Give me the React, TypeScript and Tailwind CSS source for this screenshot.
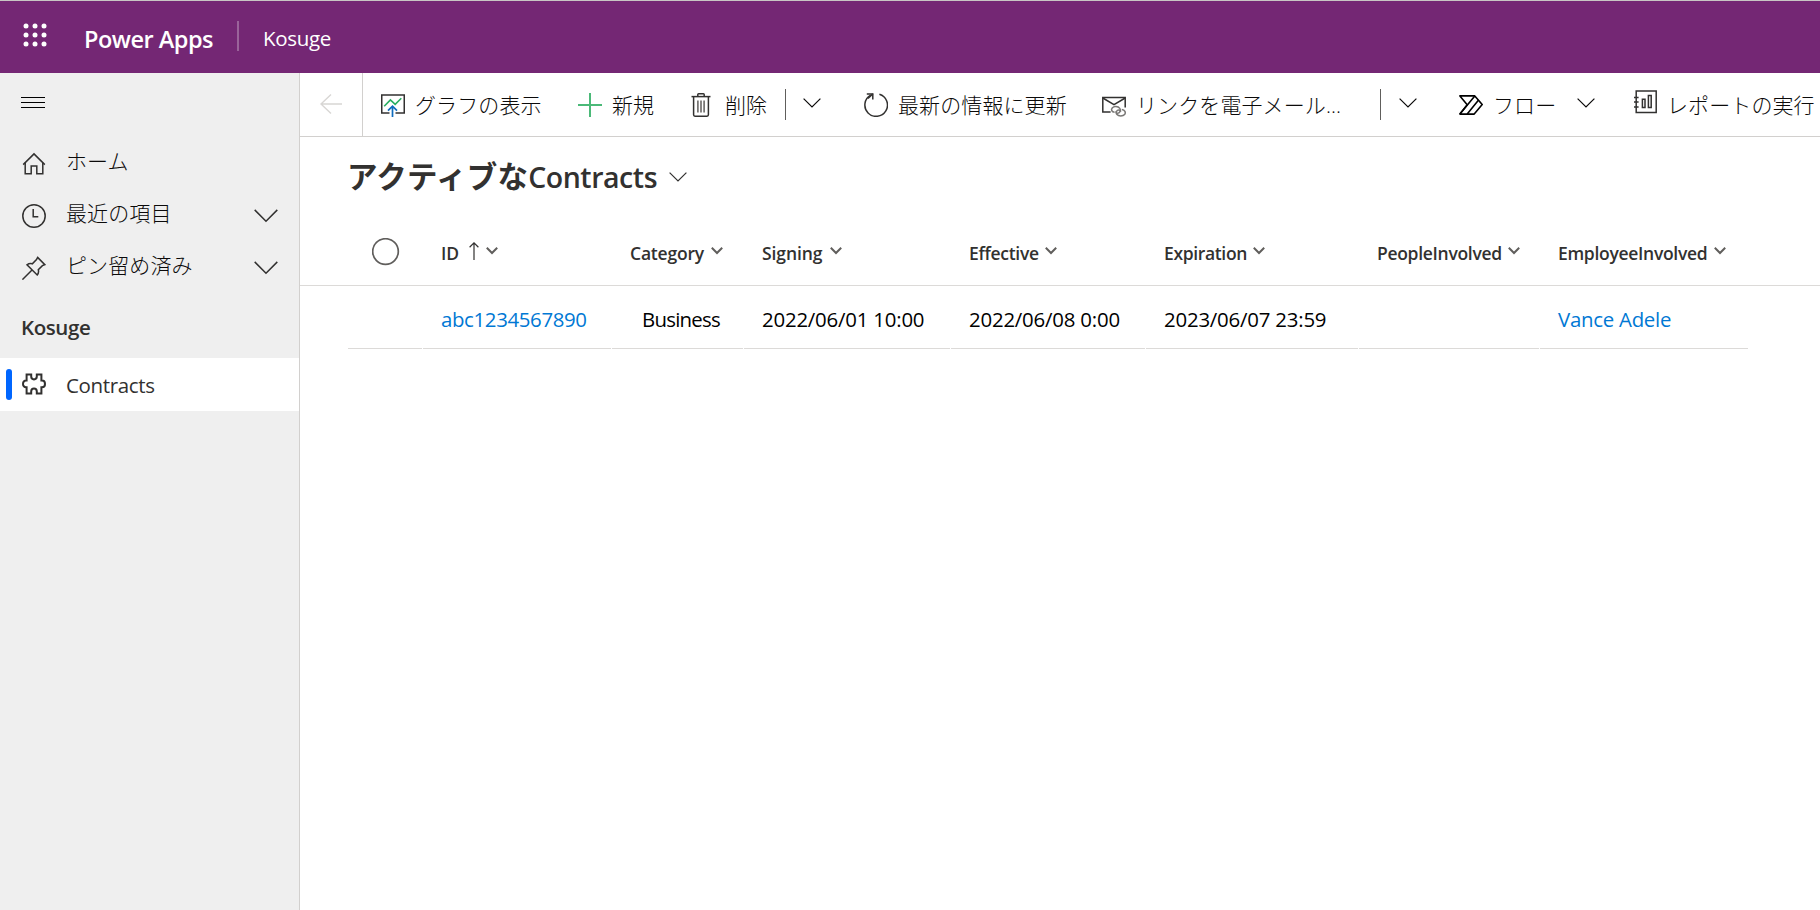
import React from "react";

type IconProps = { className?: string };

const ja = "font-['Open_Sans','Noto_Sans_CJK_JP',sans-serif]";

function Chevron({ className = "" }: IconProps) {
  return (
    <svg className={`shrink-0 ${className}`} viewBox="0 0 18 10" fill="none" stroke="currentColor" strokeWidth="1.2">
      <path d="M0.6 0.6 L9 9 L17.4 0.6" />
    </svg>
  );
}

function NavChevron({ className = "" }: IconProps) {
  return (
    <svg className={`h-[14px] w-[24px] shrink-0 ${className}`} viewBox="0 0 24 14" fill="none" stroke="#323130" strokeWidth="1.5">
      <path d="M0.7 0.9 L12 12.3 L23.3 0.9" />
    </svg>
  );
}

function SmallChevron() {
  return (
    <svg className="mb-px h-[8px] w-[12px] shrink-0" viewBox="0 0 12 8" fill="none" stroke="#605e5c" strokeWidth="2">
      <path d="M0.8 0.8 L6 6 L11.2 0.8" />
    </svg>
  );
}

function WaffleIcon() {
  return (
    <svg className="h-6 w-6 shrink-0" viewBox="0 0 24 24" fill="#fff">
      {[3, 12, 21].map((y) => [3, 12, 21].map((x) => <circle key={`${x}-${y}`} cx={x} cy={y} r="2.5" />))}
    </svg>
  );
}

function HomeIcon() {
  return (
    <svg className="mt-px h-6 w-6 shrink-0" viewBox="0 0 24 24" fill="none" stroke="#323130" strokeWidth="1.5">
      <path d="M1.2 12.6 L12 1.9 L22.8 12.6" />
      <path d="M3.2 10.8 V21.7 H9.2 V14 H14.8 V21.7 H20.8 V10.8" />
    </svg>
  );
}

function ClockIcon() {
  return (
    <svg className="mt-px h-6 w-6 shrink-0" viewBox="0 0 24 24" fill="none" stroke="#323130" strokeWidth="1.5">
      <circle cx="12" cy="12" r="11.2" />
      <path d="M11.2 5 V12.7 H16.3" />
    </svg>
  );
}

function PinIcon() {
  return (
    <svg className="mt-px h-6 w-6 shrink-0" viewBox="0 0 24 24" fill="none" stroke="#323130" strokeWidth="1.5">
      <path d="M15.6 1.4 L22.8 8.6 L20.4 9.6 L16.3 13.7 C16.9 15.8 16.4 17.6 15.2 19 L5 8.8 C6.6 7.6 8.4 7.3 10.3 7.8 L14.5 3.6 Z" />
      <path d="M10 14 L0.4 23.6" />
    </svg>
  );
}

function PuzzleIcon() {
  return (
    <svg className="h-[22px] w-6 shrink-0" viewBox="0 0 24 22" fill="none" stroke="#323130" strokeWidth="2">
      <path d="M4.6 1.4 H9.2 V3.6 C9.2 5.2 10.3 6.4 12 6.4 S14.8 5.2 14.8 3.6 V1.4 H19.4 V7.6 H20 C21.8 7.6 23 9 23 10.9 S21.8 14.2 20 14.2 H19.4 V20.4 H14.8 V18.4 C14.8 16.8 13.7 15.6 12 15.6 S9.2 16.8 9.2 18.4 V20.4 H4.6 V14.2 H4 C2.2 14.2 1 12.8 1 10.9 S2.2 7.6 4 7.6 H4.6 Z" />
    </svg>
  );
}

function ChartIcon() {
  return (
    <svg className="h-6 w-6 shrink-0" viewBox="0 0 24 24" fill="none">
      <path d="M8.5 20 H0.75 V2 H23.25 V20 H14.5" stroke="#323130" strokeWidth="1.5" />
      <path d="M3.2 13.2 L9.4 6.9 L14.2 11.4 L20.3 5.3" stroke="#27ae60" strokeWidth="1.6" />
      <path d="M11.5 24 V13.4 M7 17.6 L11.5 13.2 L16 17.6" stroke="#0f6cbd" strokeWidth="1.7" />
    </svg>
  );
}

function PlusIcon() {
  return (
    <svg className="h-6 w-6 shrink-0" viewBox="0 0 24 24" fill="none" stroke="#4bb978" strokeWidth="2">
      <path d="M12 0 V24 M0 12 H24" />
    </svg>
  );
}

function TrashIcon() {
  return (
    <svg className="h-6 w-[20px] shrink-0" viewBox="0 0 20 24" fill="none" stroke="#323130" strokeWidth="1.5">
      <path d="M0.5 3.6 H19.5" />
      <path d="M6.8 3.4 V1.6 Q6.8 0.8 7.6 0.8 H12.4 Q13.2 0.8 13.2 1.6 V3.4" />
      <path d="M2.6 3.8 V21.8 Q2.6 23.2 4 23.2 H16 Q17.4 23.2 17.4 21.8 V3.8" />
      <path d="M6.9 7.4 V19.6 M10 7.4 V19.6 M13.1 7.4 V19.6" stroke="#605e5c" />
    </svg>
  );
}

function RefreshIcon() {
  return (
    <svg className="h-6 w-6 shrink-0" viewBox="0 0 24 24" fill="none" stroke="#323130" strokeWidth="1.5">
      <path d="M15.4 1.2 A11.3 11.3 0 1 1 6.6 2.2" />
      <path d="M2.8 0.9 H8.8 V6.6" />
      <path d="M8.8 0.9 L4 5.4" />
    </svg>
  );
}

function MailLinkIcon() {
  return (
    <svg className="h-6 w-6 shrink-0" viewBox="0 0 24 24" fill="none" stroke="#323130" strokeWidth="1.5">
      <path d="M8.6 19 H0.8 V4.6 H23.2 V14.6" />
      <path d="M0.8 5 L12 11.6 L23.2 5" />
      <g stroke="#797775" strokeWidth="1.5">
        <path d="M12.6 19.2 C9.6 19 8.8 16.6 10.2 14.9 C11.8 13.2 16 13 17.8 15.4 C19.2 17.6 17.6 20.2 15.6 20.2 C14.6 20.2 13.8 19.4 14.2 18.4" />
        <path d="M19.8 16.6 C23 16.8 24 19.6 22.6 21.6 C21 23.4 16.6 23.4 15 21.6 C13.4 19.6 14.6 17 16.8 17 C18 17 18.8 17.8 18.4 18.8" />
      </g>
    </svg>
  );
}

function FlowIcon() {
  return (
    <svg className="h-[20px] w-6 shrink-0" viewBox="0 0 24 20" fill="none" stroke="#000" strokeWidth="1.6" strokeLinejoin="round">
      <path d="M0.9 0.9 H15.8 L23.2 9.6 L15.2 19.1 H0.9 L8.2 9.8 Z" />
      <path d="M15.8 0.9 L0.9 19.1 M19.4 5.2 L8.2 19.1" />
    </svg>
  );
}

function ReportIcon() {
  return (
    <svg className="h-6 w-6 shrink-0" viewBox="0 0 24 24" fill="none" stroke="#323130" strokeWidth="1.5">
      <path d="M2.2 0.9 H22.2 V22.6 H2.2 Z" />
      <path d="M0 7.4 H4.6 M0 12 H4.6 M0 17 H4.6" />
      <path d="M8.4 9.2 H11 V17.4 H8.4 Z M14.4 5.6 H17.2 V17.4 H14.4 Z" />
    </svg>
  );
}

function CommandBar() {
  return (
    <div className={`flex h-[64px] items-center border-b border-[#d2d0ce] text-[21px] font-light leading-[32px] tracking-[0.1px] whitespace-nowrap text-[#0b0a0a] ${ja}`}>
      <div className="flex h-full w-[63px] shrink-0 items-center border-r border-[#d2d0ce] pl-[20px]">
        <svg className="mb-[2px] h-[20px] w-[22px]" viewBox="0 0 22 20" fill="none" stroke="#d8d6d4" strokeWidth="1.4">
          <path d="M0.9 10 H22 M11 0.6 L1 10 L11 19.4" />
        </svg>
      </div>
      <div className="ml-[18px] flex w-[197px] shrink-0 items-center gap-[10px]">
        <ChartIcon />
        <span>グラフの表示</span>
      </div>
      <div className="flex w-[113px] shrink-0 items-center gap-[10px]">
        <PlusIcon />
        <span>新規</span>
      </div>
      <div className="flex w-[94px] shrink-0 items-center gap-[14px]">
        <TrashIcon />
        <span>削除</span>
      </div>
      <div className="h-[31px] w-px shrink-0 bg-[#605e5c]" />
      <Chevron className="mr-[43px] mb-[4px] ml-[17px] h-[10px] w-[18px]" />
      <div className="flex w-[238px] shrink-0 items-center gap-[10px]">
        <RefreshIcon />
        <span>最新の情報に更新</span>
      </div>
      <div className="flex w-[278px] shrink-0 items-center gap-[10px]">
        <MailLinkIcon />
        <span>リンクを電子メール...</span>
      </div>
      <div className="h-[31px] w-px shrink-0 bg-[#605e5c]" />
      <Chevron className="mr-[42px] mb-[4px] ml-[18px] h-[10px] w-[18px]" />
      <div className="flex w-[118px] shrink-0 items-center gap-[10px]">
        <FlowIcon />
        <span>フロー</span>
      </div>
      <Chevron className="mr-[39px] mb-[4px] h-[10px] w-[18px]" />
      <div className="flex shrink-0 items-center gap-[9px]">
        <div className="pb-[5px]">
          <ReportIcon />
        </div>
        <span>レポートの実行</span>
      </div>
    </div>
  );
}

type Column = {
  label: string;
  value: string;
  width: string;
  tracking: string;
  gap?: string;
  valueClass: string;
  sorted?: boolean;
};

const columns: Column[] = [
  { label: "ID", value: "abc1234567890", width: "w-[189px]", tracking: "tracking-normal", valueClass: "text-[#0078d4] tracking-[-0.35px]", sorted: true },
  { label: "Category", value: "Business", width: "w-[132px]", tracking: "tracking-[-0.2px]", gap: "ml-[7px]", valueClass: "text-black pl-[12px] tracking-[-0.75px]" },
  { label: "Signing", value: "2022/06/01 10:00", width: "w-[207px]", tracking: "tracking-[-0.1px]", gap: "ml-[8px]", valueClass: "text-black tracking-[-0.2px]" },
  { label: "Effective", value: "2022/06/08 0:00", width: "w-[195px]", tracking: "tracking-[-0.3px]", gap: "ml-[6px]", valueClass: "text-black tracking-[-0.2px]" },
  { label: "Expiration", value: "2023/06/07 23:59", width: "w-[213px]", tracking: "tracking-[-0.35px]", gap: "ml-[6px]", valueClass: "text-black tracking-[-0.2px]" },
  { label: "PeopleInvolved", value: "", width: "w-[181px]", tracking: "tracking-[-0.3px]", gap: "ml-[6px]", valueClass: "text-black" },
  { label: "EmployeeInvolved", value: "Vance Adele", width: "w-[209px]", tracking: "tracking-[-0.3px]", gap: "ml-[7px]", valueClass: "text-[#0078d4] tracking-[-0.25px]" },
];

function Grid() {
  return (
    <div className="whitespace-nowrap font-['Open_Sans',sans-serif]">
      <div className="flex h-[68px] items-center border-b border-[#dcdad8] pl-[48px]">
        <div className="flex w-[75px] shrink-0 pl-[24px]">
          <svg className="h-7 w-7 shrink-0" viewBox="0 0 28 28" fill="none" stroke="#605e5c" strokeWidth="1.7">
            <circle cx="13.5" cy="13.5" r="12.8" />
          </svg>
        </div>
        {columns.map((c) => (
          <div key={c.label} className={`flex shrink-0 items-center pl-[18px] ${c.width}`}>
            <span className={`mt-[3px] text-[17.5px] leading-6 font-semibold text-[#323130] ${c.tracking}`}>{c.label}</span>
            {c.sorted && (
              <svg className="mr-[7px] mb-[2px] ml-[10px] h-[18px] w-[10px] shrink-0" viewBox="0 0 10 18" fill="none" stroke="#323130" strokeWidth="1.2">
                <path d="M5 18 V1 M0.6 5.2 L5 0.9 L9.4 5.2" />
              </svg>
            )}
            <div className={c.gap ?? ""}>
              <SmallChevron />
            </div>
          </div>
        ))}
      </div>
      <div className="flex h-[63px] pl-[48px]">
        <div className="mr-px w-[74px] shrink-0 border-b border-[#dcdad8]" />
        {columns.map((c) => (
          <div key={c.label} className={`flex shrink-0 pr-px ${c.width}`}>
            <div className="flex w-full items-center border-b border-[#dcdad8] pt-[4px] pl-[18px]">
              <span className={`text-[20.4px] leading-7 ${c.valueClass}`}>{c.value}</span>
            </div>
          </div>
        ))}
      </div>
    </div>
  );
}

function Sidebar() {
  const row = "flex h-[52px] items-center pl-[22px]";
  const label = "mb-[4px] ml-[20px] text-[21px] leading-[32px] font-light tracking-[0.1px] text-[#0b0a0a]";
  return (
    <nav className={`flex w-[300px] shrink-0 flex-col border-r border-[#d2d0ce] bg-[#efefef] whitespace-nowrap ${ja}`}>
      <div className="flex h-[64px] flex-col gap-[4px] pt-[24px] pl-[21px]">
        <div className="h-px w-6 bg-black" />
        <div className="h-px w-6 bg-black" />
        <div className="h-px w-6 bg-black" />
      </div>
      <div className={row}>
        <HomeIcon />
        <span className={label}>ホーム</span>
      </div>
      <div className={row}>
        <ClockIcon />
        <span className={label}>最近の項目</span>
        <NavChevron className="mt-px mr-[21px] ml-auto" />
      </div>
      <div className={row}>
        <PinIcon />
        <span className={label}>ピン留め済み</span>
        <NavChevron className="mt-px mr-[21px] ml-auto" />
      </div>
      <div className="flex h-[65px] items-center pt-[4px] pl-[21px] text-[20.5px] font-semibold tracking-[-0.4px] text-[#323130]">
        Kosuge
      </div>
      <div className="flex h-[53px] items-center bg-white pl-[6px]">
        <div className="h-[31px] w-[6px] rounded-full bg-[#0066ff]" />
        <div className="mb-px ml-[10px] flex">
          <PuzzleIcon />
        </div>
        <span className="mt-[2px] ml-[20px] text-[20.5px] tracking-[-0.35px] text-[#323130]">Contracts</span>
      </div>
    </nav>
  );
}

export default function App() {
  return (
    <div className="flex h-[910px] w-[1820px] flex-col overflow-hidden bg-white font-['Open_Sans','Noto_Sans_CJK_JP',sans-serif]">
      <header className="flex h-[73px] shrink-0 items-center border-t border-[#c8c6c4] bg-[#742774] pl-[23px] text-white">
        <div className="pb-[4px]">
          <WaffleIcon />
        </div>
        <span className="mt-[3px] ml-[37px] w-[153px] text-[23.5px] leading-8 font-semibold tracking-[-0.5px]">Power Apps</span>
        <div className="mb-[2px] h-[30px] w-[2px] bg-[#9a639a]" />
        <span className="mt-[2px] ml-[24px] text-[20.5px] leading-8 tracking-[-0.3px]">Kosuge</span>
      </header>
      <div className="flex min-h-0 flex-1">
        <Sidebar />
        <main className="flex min-w-0 flex-1 flex-col overflow-hidden bg-white">
          <CommandBar />
          <div className="flex h-[81px] items-center pb-[3px] pl-[47px] whitespace-nowrap text-[#323130]">
            <h1 className="flex items-baseline">
              <span className="font-['Noto_Sans_CJK_JP',sans-serif] text-[30.5px] leading-10 font-bold tracking-[0.25px]">アクティブな</span>
              <span className="text-[28.5px] leading-10 font-semibold tracking-[-0.45px]">Contracts</span>
            </h1>
            <Chevron className="mt-[2px] ml-[12px] h-[10px] w-[18px]" />
          </div>
          <Grid />
        </main>
      </div>
    </div>
  );
}
